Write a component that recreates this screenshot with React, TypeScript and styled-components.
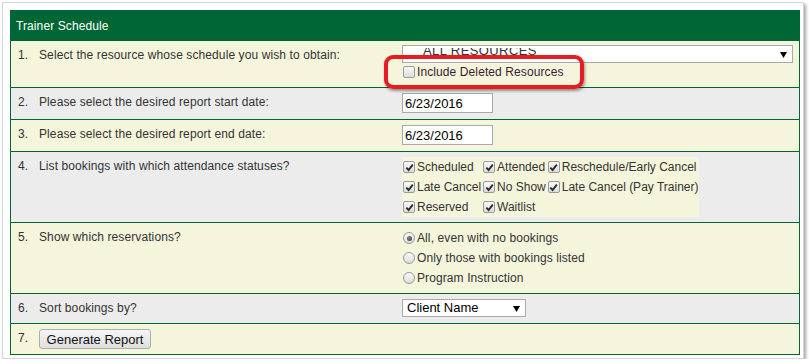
import styled, { createGlobalStyle } from "styled-components";

const GREEN = "#006633";
const CREAM = "#f5f5dc";
const GRAY = "#ececec";

const GlobalStyle = createGlobalStyle`
  body {
    margin: 0;
    background: #fff;
    font-family: "Liberation Sans", Arial, sans-serif;
  }
`;

const Frame = styled.div`
  position: relative;
  box-sizing: border-box;
  width: 802px;
  height: 357px;
  margin: 2px 0 0 2px;
  padding: 7px 3px 0 7px;
  border: 1px solid #d6d6d6;
  box-shadow: 2px 2px 3px rgba(0, 0, 0, 0.35);
  background: #fff;
`;

const Table = styled.div`
  box-sizing: border-box;
  width: 790px;
  border: 1px solid ${GREEN};
  color: #333;
  font-size: 12px;
  letter-spacing: 0.1px;
`;

const Header = styled.div`
  height: 29px;
  display: flex;
  align-items: center;
  padding: 0 5px;
  background: ${GREEN};
  color: #fff;
`;

const Row = styled.div<{ $h: number; $alt?: boolean }>`
  box-sizing: border-box;
  display: grid;
  grid-template-columns: 391px 1fr;
  height: ${(p) => p.$h}px;
  border-top: 1px solid ${GREEN};
  background: ${(p) => (p.$alt ? GRAY : CREAM)};
`;

const Label = styled.div`
  display: flex;
  align-items: flex-start;
  padding: 5px 0 0 7px;
  line-height: 18px;
`;

const Num = styled.span`
  flex: none;
  width: 21px;
`;

const Value = styled.div`
  padding-top: 5px;
`;

const FakeSelect = styled.div<{ $w: number }>`
  position: relative;
  box-sizing: border-box;
  width: ${(p) => p.$w}px;
  height: 18px;
  border: 1px solid #a9a9a9;
  background: #fff;
  color: #000;
  font-size: 13px;
  letter-spacing: 0;
  line-height: 16px;
  padding-left: 4px;
`;

const ResourceSelect = styled(FakeSelect)`
  margin-top: -1px;
  padding-left: 0;
`;

const ClipWindow = styled.div`
  margin: 2px 0 0 20px;
  height: 8px;
  overflow: hidden;
  color: #333;
`;

const ClippedText = styled.div`
  margin-top: -5px;
  line-height: 15px;
  letter-spacing: 0.4px;
`;

const Arrow = styled.svg`
  position: absolute;
  right: 5px;
  top: 6px;
`;

const DateInput = styled.input`
  box-sizing: border-box;
  width: 91px;
  height: 20px;
  margin: 0;
  padding: 0 2px;
  border: 1px solid #a9a9a9;
  background: #fff;
  color: #000;
  font-family: "Liberation Sans", Arial, sans-serif;
  font-size: 13px;
  outline: none;
`;

const Option = styled.label<{ $h?: number }>`
  display: flex;
  align-items: center;
  height: ${(p) => p.$h ?? 20}px;
  white-space: nowrap;
`;

const Box = styled.span<{ $round?: boolean }>`
  flex: none;
  box-sizing: border-box;
  display: inline-flex;
  align-items: center;
  justify-content: center;
  width: 12px;
  height: 12px;
  margin: 0 2px 0 1px;
  border: 1px solid #9a9a9a;
  border-radius: ${(p) => (p.$round ? "50%" : "2px")};
  background: linear-gradient(#fbfbfb, #dcdcdc);
`;

const Dot = styled.span`
  width: 5px;
  height: 5px;
  border-radius: 50%;
  background: radial-gradient(circle at 40% 35%, #888, #333);
`;

const StatusGrid = styled.div`
  display: inline-grid;
  grid-template-columns: auto auto auto;
  column-gap: 1px;
  padding-right: 1px;
  letter-spacing: 0;
  background: ${CREAM};
`;

const Button = styled.button`
  box-sizing: border-box;
  width: 112px;
  height: 20px;
  padding: 0;
  border: 1px solid #adadad;
  border-radius: 3px;
  background: linear-gradient(#f6f6f6, #dedede);
  color: #111;
  font-family: "Liberation Sans", Arial, sans-serif;
  font-size: 13px;
`;

const Callout = styled.div`
  position: absolute;
  left: 381px;
  top: 52px;
  box-sizing: border-box;
  width: 200px;
  height: 34px;
  border: 4px solid #e81b20;
  border-radius: 9px;
  box-shadow: 1px 2px 3px rgba(0, 0, 0, 0.4);
  pointer-events: none;
`;

function DownArrow() {
  return (
    <Arrow width="7" height="6" viewBox="0 0 7 6">
      <path d="M0 0 H7 L3.5 6 Z" fill="#000" />
    </Arrow>
  );
}

function Check({ label, checked }: { label: string; checked?: boolean }) {
  return (
    <Option>
      <Box>
        {checked && (
          <svg width="9" height="9" viewBox="0 0 9 9">
            <path d="M1.3 4.6 L3.6 7 L7.8 1.6" fill="none" stroke="#2b2b2b" strokeWidth="1.9" />
          </svg>
        )}
      </Box>
      {label}
    </Option>
  );
}

function Radio({ label, checked }: { label: string; checked?: boolean }) {
  return (
    <Option>
      <Box $round>{checked && <Dot />}</Box>
      {label}
    </Option>
  );
}

const statuses = [
  "Scheduled",
  "Attended",
  "Reschedule/Early Cancel",
  "Late Cancel",
  "No Show",
  "Late Cancel (Pay Trainer)",
  "Reserved",
  "Waitlist",
];

export default function App() {
  return (
    <>
      <GlobalStyle />
      <Frame>
        <Table>
          <Header>Trainer Schedule</Header>
          <Row $h={47}>
            <Label>
              <Num>1.</Num>Select the resource whose schedule you wish to obtain:
            </Label>
            <Value>
              <ResourceSelect $w={391}>
                <ClipWindow>
                  <ClippedText>ALL RESOURCES</ClippedText>
                </ClipWindow>
                <DownArrow />
              </ResourceSelect>
              <Option $h={18}>
                <Box />
                <span style={{ color: "#3a1a35" }}>Include Deleted Resources</span>
              </Option>
            </Value>
          </Row>
          <Row $h={32} $alt>
            <Label>
              <Num>2.</Num>Please select the desired report start date:
            </Label>
            <Value>
              <DateInput readOnly value="6/23/2016" />
            </Value>
          </Row>
          <Row $h={32}>
            <Label>
              <Num>3.</Num>Please select the desired report end date:
            </Label>
            <Value>
              <DateInput readOnly value="6/23/2016" />
            </Value>
          </Row>
          <Row $h={71} $alt>
            <Label>
              <Num>4.</Num>List bookings with which attendance statuses?
            </Label>
            <Value>
              <StatusGrid>
                {statuses.map((s) => (
                  <Check key={s} label={s} checked />
                ))}
              </StatusGrid>
            </Value>
          </Row>
          <Row $h={71}>
            <Label>
              <Num>5.</Num>Show which reservations?
            </Label>
            <Value>
              <Radio label="All, even with no bookings" checked />
              <Radio label="Only those with bookings listed" />
              <Radio label="Program Instruction" />
            </Value>
          </Row>
          <Row $h={30} $alt>
            <Label>
              <Num>6.</Num>Sort bookings by?
            </Label>
            <Value>
              <FakeSelect $w={124}>
                Client Name
                <DownArrow />
              </FakeSelect>
            </Value>
          </Row>
          <Row $h={31}>
            <Label>
              <Num>7.</Num>
              <Button>Generate Report</Button>
            </Label>
            <Value />
          </Row>
        </Table>
        <Callout />
      </Frame>
    </>
  );
}
